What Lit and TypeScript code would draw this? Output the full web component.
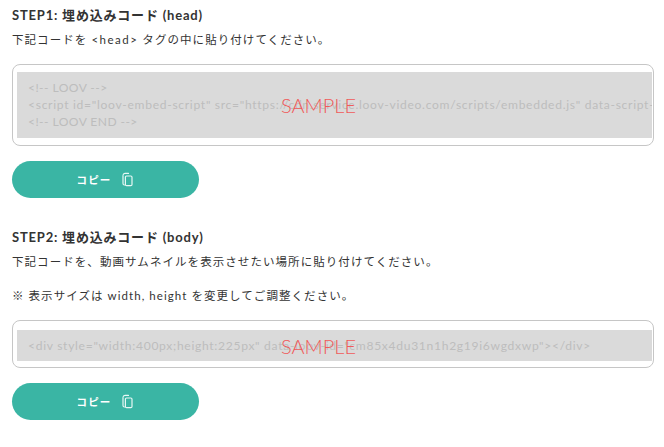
import { LitElement, html, css, svg } from "lit";
import { customElement } from "lit/decorators.js";

const copyIcon = svg`<path d="M3 3.5V11.5C3 12.3 3.6 13 4.5 13" fill="none" stroke="currentColor" stroke-width="1.2" stroke-linecap="round"/><path d="M3.2 2.6C3.5 1.8 4.2 1.4 5 1.4H8.5" fill="none" stroke="currentColor" stroke-width="1.2" stroke-linecap="round"/><rect x="5.4" y="4" width="6.6" height="9.6" rx="1.2" fill="none" stroke="currentColor" stroke-width="1.2"/>`;

@customElement("app-root")
export class AppRoot extends LitElement {
  static styles = css`
    :host {
      display: block;
      width: 664px;
      height: 447px;
      overflow: hidden;
      background: #fff;
      color: #333;
      font-family: "Lato", "Noto Sans CJK JP", sans-serif;
      position: relative;
    }
    .page {
      display: flex;
      flex-direction: column;
      padding: 6px 10px 0 12px;
    }
    h2 {
      margin: 0;
      font-size: 13px;
      line-height: 18px;
      font-weight: 700;
      letter-spacing: 0.8px;
    }
    p {
      margin: 0;
      font-size: 11.5px;
      line-height: 18px;
      letter-spacing: 1.06px;
    }
    .latin { letter-spacing: 1.5px; }
    .first-p { margin-top: 7px; }
    .note { margin-top: 16px; }
    .box {
      border: 1px solid #c6c6c6;
      border-radius: 8px;
      background: #fff;
      padding: 7px 1px 6px 4px;
      overflow: hidden;
      box-sizing: border-box;
    }
    .box.one { margin-top: 15px; height: 82px; }
    .box.two { margin-top: 15px; height: 48px; padding-top: 9px; }
    .code {
      background: #dadada;
      color: #bdbdbd;
      font-size: 12.1px;
      line-height: 17px;
      letter-spacing: 0.69px;
      white-space: pre;
      overflow: hidden;
      padding: 7px 0 8px 11px;
    }
    .caps { letter-spacing: 0.42px; }
    .two .code { padding: 7px 0 7px 11px; }
    button {
      appearance: none;
      border: 0;
      margin: 15px 0 0;
      width: 187px;
      height: 37px;
      border-radius: 19px;
      background: #3ab5a4;
      color: #fff;
      font: 700 10.5px "Lato", "Noto Sans CJK JP", sans-serif;
      letter-spacing: 1.1px;
      display: flex;
      align-items: center;
      justify-content: center;
      gap: 9px;
      padding: 0;
    }
    button svg { width: 14px; height: 15px; color: #e6f7f4; }
    .s2 { margin-top: 30px; }
    .s2p { margin-top: 7px; }
    .mark {
      position: absolute;
      left: 281px;
      color: #f05a5a;
      font-size: 20px;
      line-height: 24px;
      font-weight: 300;
      pointer-events: none;
    }
    .m1 { top: 93px; }
    .m2 { top: 334px; }
  `;

  render() {
    const btn = html`<button>コピー<svg viewBox="0 0 14 15">${copyIcon}</svg></button>`;
    return html`
      <div class="page">
        <h2>STEP1: 埋め込みコード (head)</h2>
        <p class="first-p">下記コードを <span class="latin">&lt;head&gt;</span> タグの中に貼り付けてください。</p>
        <div class="box one"><div class="code"><span class="caps">&lt;!-- LOOV --&gt;</span>
&lt;script id="loov-embed-script" src="https://cdn.service.loov-video.com/scripts/embedded.js" data-script-id="loov"&gt;&lt;/script&gt;
<span class="caps">&lt;!-- LOOV END --&gt;</span></div></div>
        ${btn}
        <h2 class="s2">STEP2: 埋め込みコード (body)</h2>
        <p class="s2p">下記コードを、動画サムネイルを表示させたい場所に貼り付けてください。</p>
        <p class="note">※ 表示サイズは width, height を変更してご調整ください。</p>
        <div class="box two"><div class="code">&lt;div style="width:400px;height:225px" data-loov-id="cm85x4du31n1h2g19i6wgdxwp"&gt;&lt;/div&gt;</div></div>
        ${btn}
      </div>
      <div class="mark m1">SAMPLE</div>
      <div class="mark m2">SAMPLE</div>
    `;
  }
}
